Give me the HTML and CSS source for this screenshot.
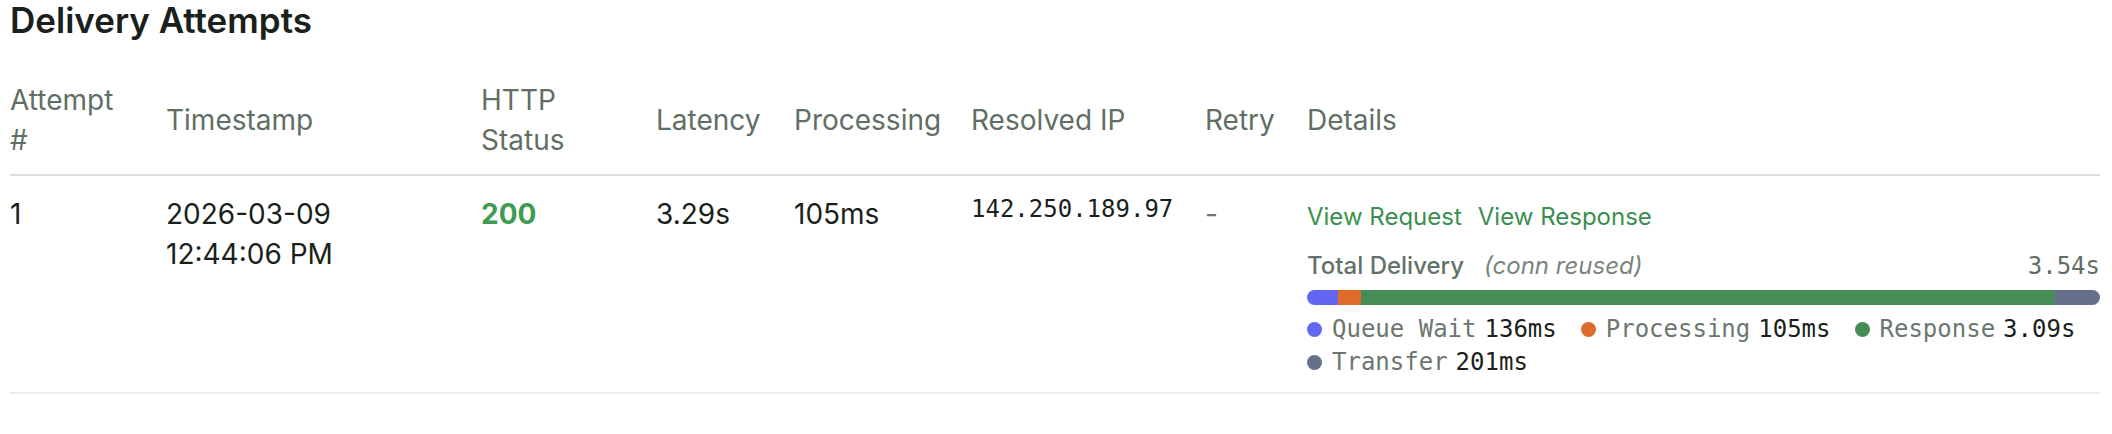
FILE: index.html
```html
<!DOCTYPE html>
<html lang="en">

<head>
    <meta charset="UTF-8">
    <meta name="viewport" content="width=device-width, initial-scale=1.0">
    <title>Delivery Attempts</title>
    <link rel="stylesheet" href="styles.css">
</head>

<body>
    <div class="page">
        <h2 class="section_title">Delivery Attempts</h2>
        <table class="attempts">
            <colgroup>
                <col class="c_num">
                <col class="c_time">
                <col class="c_status">
                <col class="c_latency">
                <col class="c_proc">
                <col class="c_ip">
                <col class="c_retry">
                <col class="c_details">
            </colgroup>
            <thead>
                <tr>
                    <th>Attempt #</th>
                    <th>Timestamp</th>
                    <th>HTTP Status</th>
                    <th>Latency</th>
                    <th>Processing</th>
                    <th>Resolved IP</th>
                    <th>Retry</th>
                    <th>Details</th>
                </tr>
            </thead>
            <tbody>
                <tr>
                    <td>1</td>
                    <td>2026-03-09 12:44:06 PM</td>
                    <td><span class="status_ok">200</span></td>
                    <td>3.29s</td>
                    <td>105ms</td>
                    <td><span class="ip">142.250.189.97</span></td>
                    <td class="muted">-</td>
                    <td>
                        <div class="detail_links">
                            <a href="#">View Request</a>
                            <a href="#">View Response</a>
                        </div>
                        <div class="timing_head">
                            <span class="timing_label">Total Delivery</span>
                            <span class="timing_note">(conn reused)</span>
                            <span class="timing_total">3.54s</span>
                        </div>
                        <!-- segment widths = phase time / 3532ms -->
                        <div class="timing_bar">
                            <span class="seg queue" style="width: 3.85%"></span>
                            <span class="seg proc" style="width: 2.97%"></span>
                            <span class="seg resp" style="width: 87.49%"></span>
                            <span class="seg xfer" style="width: 5.69%"></span>
                        </div>
                        <ul class="timing_legend">
                            <li><i class="dot queue"></i><span class="lg_name">Queue Wait</span><span class="lg_val">136ms</span></li>
                            <li><i class="dot proc"></i><span class="lg_name">Processing</span><span class="lg_val">105ms</span></li>
                            <li><i class="dot resp"></i><span class="lg_name">Response</span><span class="lg_val">3.09s</span></li>
                            <li><i class="dot xfer"></i><span class="lg_name">Transfer</span><span class="lg_val">201ms</span></li>
                        </ul>
                    </td>
                </tr>
            </tbody>
        </table>
    </div>
</body>

</html>
```

FILE: styles.css
```css
body {
    margin: 0;
    background: #fff;
    color: #1a1f1b;
    font-family: Inter, "Noto Sans", sans-serif;
}

.page {
    padding: 0 12px 0 10px;
}

.section_title {
    margin: 0 0 24px;
    font-size: 35px;
    line-height: 40px;
    font-weight: 600;
    color: #1a211c;
}

.attempts {
    width: 100%;
    border-collapse: collapse;
    table-layout: fixed;
    font-size: 28px;
    line-height: 40px;
}

.c_num { width: 156px; }
.c_time { width: 315px; }
.c_status { width: 175px; }
.c_latency { width: 138px; }
.c_proc { width: 177px; }
.c_ip { width: 234px; }
.c_retry { width: 102px; }

.attempts th {
    padding: 16px 36px 14px 0;
    text-align: left;
    font-weight: 400;
    color: #5f6f64;
    vertical-align: middle;
    border-bottom: 2px solid #d9e1d9;
}

.attempts td {
    padding: 18px 36px 16px 0;
    vertical-align: top;
    border-bottom: 2px solid #e9eee9;
}

.attempts th:last-child,
.attempts td:last-child {
    padding-right: 0;
}

.status_ok {
    font-weight: 700;
    color: #3f9a52;
}

.ip {
    display: block;
    font-family: "DejaVu Sans Mono", monospace;
    font-size: 24px;
    line-height: 30px;
}

.muted {
    color: #6b776e;
}

.detail_links {
    display: flex;
    gap: 16px;
    padding-top: 3px;
    font-size: 24px;
}

.detail_links a {
    color: #3a8f4e;
    text-decoration: none;
}

.timing_head {
    display: flex;
    align-items: baseline;
    margin-top: 13px;
    font-size: 24px;
    line-height: 32px;
}

.timing_label {
    font-weight: 500;
    color: #637268;
}

.timing_note {
    margin-left: 20px;
    font-style: italic;
    color: #7a857d;
}

.timing_total {
    margin-left: auto;
    font-family: "DejaVu Sans Mono", monospace;
    color: #5f6f64;
}

.timing_bar {
    display: flex;
    height: 15px;
    margin-top: 8px;
    border-radius: 8px;
    overflow: hidden;
}

.seg.queue, .dot.queue { background: #6366f1; }
.seg.proc, .dot.proc { background: #dd6b2a; }
.seg.resp, .dot.resp { background: #468c56; }
.seg.xfer, .dot.xfer { background: #65718a; }

.timing_legend {
    display: flex;
    flex-wrap: wrap;
    gap: 5px 24px;
    margin: 10px 0 0;
    padding: 0;
    list-style: none;
    font-family: "DejaVu Sans Mono", monospace;
    font-size: 24px;
    line-height: 28px;
}

.timing_legend li {
    display: flex;
    align-items: center;
    gap: 8px;
}

.dot {
    width: 15px;
    height: 15px;
    margin-right: 2px;
    border-radius: 50%;
}

.lg_name {
    color: #6b776e;
}

.lg_val {
    color: #1a1f1b;
}
```
